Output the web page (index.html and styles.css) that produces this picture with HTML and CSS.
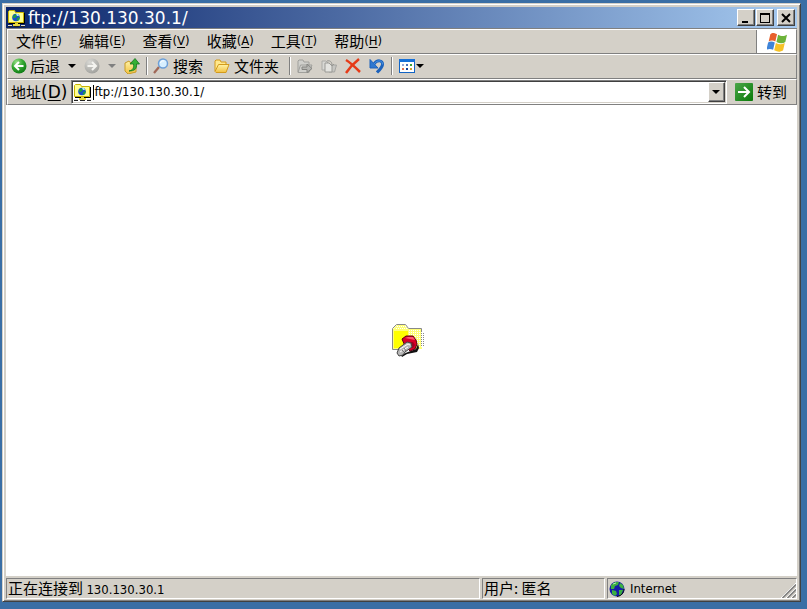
FILE: index.html
```html
<!DOCTYPE html>
<html lang="zh-CN">
<head>
<meta charset="utf-8">
<title>ftp://130.130.30.1/</title>
<link rel="stylesheet" href="styles.css">
</head>
<body>
<svg class="defs" aria-hidden="true">
  <defs>
    <radialGradient id="green" cx="35%" cy="25%" r="80%"><stop offset="0" stop-color="#9be08a"/><stop offset=".5" stop-color="#35a832"/><stop offset="1" stop-color="#0d7a14"/></radialGradient>
    <radialGradient id="grey" cx="35%" cy="25%" r="80%"><stop offset="0" stop-color="#d8d8d4"/><stop offset="1" stop-color="#a0a09c"/></radialGradient>
    <linearGradient id="go" x1="0" y1="0" x2="1" y2="1"><stop offset="0" stop-color="#4ca64a"/><stop offset="1" stop-color="#087a08"/></linearGradient>
    <linearGradient id="folder" x1="0" y1="0" x2="0" y2="1"><stop offset="0" stop-color="#fff3a8"/><stop offset="1" stop-color="#f2c141"/></linearGradient>
    <symbol id="ftp" viewBox="0 0 18 18">
      <path d="M1.500 13.500v-11l1-1h5l1 2h8v10z" fill="#ffff90" stroke="#c8b400"/>
      <path d="M2 14.500h15.500V4" fill="none" stroke="#000"/>
      <circle cx="9" cy="8.500" r="3.800" fill="#1a50c8"/>
      <path d="M6 7l3-2 1 2-2 2-2 0zM10 9l3-1-1 3-2 1z" fill="#1f9a48"/>
      <path d="M9 5l2 0 1 2-2 0z" fill="#a8e8ff"/>
      <path d="M1 16.500h4M14 16.500h4" stroke="#ddd"/><path d="M1 17.500h4M7 17.500h5M14 17.500h4" stroke="#222"/>
      <path d="M8 14h3v1H8zM6 15h7v2H6z" fill="#e8d840"/>
    </symbol>
  </defs>
</svg>
<main class="window">
  <header class="title-bar">
    <svg class="ftp-icon" aria-hidden="true"><use href="#ftp"/></svg>
    <h1>ftp://130.130.30.1/</h1>
    <div class="captions">
      <button aria-label="最小化"><svg viewBox="0 0 12 12"><path d="M2 9h6v2H2z"/></svg></button>
      <button aria-label="最大化"><svg viewBox="0 0 12 12"><path d="M1 1h10v10H1zM2 3v7h8V3z" fill-rule="evenodd"/></svg></button>
      <button class="close" aria-label="关闭"><svg viewBox="0 0 12 12"><path d="M2 2l8 8M10 2l-8 8" stroke="#000" stroke-width="2"/></svg></button>
    </div>
  </header>
  <div class="bars">
    <div class="band menu-band">
      <nav class="menu">
        <button>文件<span>(<u>F</u>)</span></button>
        <button>编辑<span>(<u>E</u>)</span></button>
        <button>查看<span>(<u>V</u>)</span></button>
        <button>收藏<span>(<u>A</u>)</span></button>
        <button>工具<span>(<u>T</u>)</span></button>
        <button>帮助<span>(<u>H</u>)</span></button>
      </nav>
      <div class="brand">
        <svg viewBox="1 1 18 18" aria-hidden="true">
          <path d="M4 3c2-2 4-1 6 0L8.500 9.500c-2-1-4-1-6 0z" fill="#e8602c"/>
          <path d="M11 3.500c2 1 5 2 8 0L17.500 10c-2 1.500-5 1.500-8 0z" fill="#6db33a"/>
          <path d="M2 10.500c2-1.500 4-1 6 0L6.500 17c-2-1-4-1-6 0z" fill="#3f84d8"/>
          <path d="M9 11c3 1.500 5 1.500 8 0l-1.500 6.500c-3 2-5 1.500-8 0z" fill="#f6c227"/>
        </svg>
      </div>
    </div>
    <div class="band toolbar">
      <button><svg viewBox="0 0 16 16"><circle cx="8" cy="8" r="7.500" fill="url(#green)"/><path d="M12.500 8H5M8 4L4 8l4 4" fill="none" stroke="#fff" stroke-width="2"/></svg>后退</button>
      <button class="drop" aria-label="后退列表"><svg viewBox="0 0 8 4"><path d="M0 0h8L4 4z"/></svg></button>
      <button aria-label="前进"><svg viewBox="0 0 16 16"><circle cx="8" cy="8" r="7.500" fill="url(#grey)"/><path d="M3.500 8H11M8 4l4 4-4 4" fill="none" stroke="#f4f4f0" stroke-width="2"/></svg></button>
      <button class="drop off" aria-label="前进列表"><svg viewBox="0 0 8 4"><path d="M0 0h8L4 4z"/></svg></button>
      <button aria-label="向上"><svg viewBox="0 0 16 16"><path d="M1 5l4-2 1 1.500 6-.5v10l-8 2-3-3z" fill="url(#folder)" stroke="#c89b28"/><path d="M5 13c4-1 5-3 4.500-7H6l5-5.500 4.500 5.500h-3c.5 5-2 7-7.500 7z" fill="#35b035" stroke="#12751a" stroke-width=".8"/></svg></button>
      <i class="separator"></i>
      <button class="wide"><svg viewBox="0 0 16 16"><path d="M1 15l5-6" stroke="#a06858" stroke-width="2.200"/><circle cx="10" cy="5.500" r="4.500" fill="#d7efff" stroke="#6c9fd8" stroke-width="1.500"/><path d="M7.500 5c.5-2 2-2.500 3.500-2" stroke="#fff" fill="none"/></svg>搜索</button>
      <button class="wide"><svg viewBox="0 0 16 16"><path d="M1 13V3l1-1h4l1 2h5v3" fill="#ffe88c" stroke="#d39a1c"/><path d="M1 13.500L4.500 6.500H15l-3 8H2z" fill="url(#folder)" stroke="#d39a1c"/></svg>文件夹</button>
      <i class="separator"></i>
      <button aria-label="移至" disabled><svg viewBox="0 0 16 16"><path d="M1 14V3l1-1h4l1 2h5v3M1 14.500L3.500 7H15l-3 7.500z" fill="#d0d0cc" stroke="#a0a09c"/><path d="M5 9h5V6l5 4.500-5 4v-3H5z" fill="#b5b5b1" stroke="#858581"/></svg></button>
      <button aria-label="复制到" disabled><svg viewBox="0 0 16 16"><path d="M8 14l2-7h5.500l-2 7z" fill="#c6c6c2" stroke="#a5a5a1"/><path d="M1 3h4l2 2v7H1z" fill="#d8d8d4" stroke="#aaaaa6"/><path d="M4 5h4l3 3v6H4z" fill="#e4e4e0" stroke="#999995"/><path d="M6 3c3-1 5 1 5 4M9 6l2 2 2-2" fill="none" stroke="#999995"/></svg></button>
      <button aria-label="删除"><svg viewBox="0 0 16 16"><path d="M1 2c5 3 9 7 14 12M14 1C9 5 5 9 1 15" fill="none" stroke="#e63b18" stroke-width="2.500"/></svg></button>
      <button aria-label="撤消"><svg viewBox="0 0 16 16"><path d="M5 6C8 1.500 14 2 13.500 6.500 13.200 9.500 11 11.500 8 14.500" fill="none" stroke="#1c62bc" stroke-width="3"/><path d="M1 1.500v8.500h8z" fill="#2f78d0" stroke="#1c62bc"/><path d="M5 6C8 1.500 14 2 13.500 6.500" fill="none" stroke="#4a94e4"/></svg></button>
      <i class="separator"></i>
      <button class="views" aria-label="查看方式"><svg viewBox="0 0 16 16"><rect x=".5" y="1.500" width="15" height="13" fill="#fff" stroke="#1264c4"/><path d="M0 1h16v3H0z" fill="#1670d8"/><path d="M3 6h2v2H3z" fill="#99a8d8"/><path d="M7 6h2v2H7z" fill="#4b70b8"/><path d="M11 6h2v2h-2z" fill="#38a038"/><path d="M3 10h2v2H3z" fill="#e07050"/><path d="M7 10h2v2H7z" fill="#153e98"/><path d="M11 10h2v2h-2z" fill="#d0a030"/></svg><svg class="tip" viewBox="0 0 8 4"><path d="M0 0h8L4 4z"/></svg></button>
    </div>
    <div class="band address-band">
      <label for="address">地址<span>(<u>D</u>)</span></label>
      <div class="combo">
        <svg class="ftp-icon" aria-hidden="true"><use href="#ftp"/></svg>
        <i class="caret"></i>
        <input id="address" type="text" value="ftp://130.130.30.1/">
        <button aria-label="地址列表"><svg viewBox="0 0 8 4"><path d="M0 0h8L4 4z"/></svg></button>
      </div>
      <button class="go"><svg viewBox="0 0 18 18"><rect width="18" height="18" rx="1" fill="url(#go)"/><path d="M3 9h10M9 4l5 5-5 5" fill="none" stroke="#fff" stroke-width="2"/></svg>转到</button>
    </div>
  </div>
  <section class="view">
    <svg viewBox="0 0 32 33" role="img" aria-label="正在连接">
      <path d="M1 25V5l4-4h8l3 4h14v20z" fill="#ffff78"/>
      <path d="M2 7h14v17H2z" fill="#ff0"/>
      <path d="M5 2.500h9M4 4.500h12M17 6.500h13M17 8.500h13M17 10.500h13M17 12.500h13M17 14.500h13M17 16.500h13M17 18.500h13M17 20.500h13M17 22.500h13" stroke="#fff" stroke-dasharray="1 1"/>
      <path d="M.5 25.500V4.500L4.500.5h9l3 4h13v3M.5 25.500H8" fill="none" stroke="#888"/>
      <path d="M29.500 5v17M31.500 9v14" stroke="#888" stroke-dasharray="1 1"/>
      <path d="M9 31l7-3 8-3 2-5 1 4-2 4-10 2-5 3z" fill="#111"/>
      <path d="M10 15l4-3h7l3 4 1 4-2 5-5 2-5-5z" fill="#d90028" stroke="#5a0010"/>
      <path d="M13 14l3-1 5 0 2 3-5-1z" fill="#ff5870"/>
      <path d="M17 18l4 0 2 3-2 3-4 0z" fill="#a00020"/>
      <path d="M5 29l2-5 8-6 4 1 1 4-7 5-2 3-4 1z" fill="#b8b8b8" stroke="#444"/>
      <path d="M8 25l8-5 2 1M8 28l8-5" fill="none" stroke="#fff"/>
      <path d="M12 24l2 3M10 26l2 2" stroke="#777"/>
    </svg>
  </section>
  <footer class="status">
    <div class="pane">正在连接到 <span>130.130.30.1</span></div>
    <div class="pane">用户: 匿名</div>
    <div class="pane zone">
      <svg viewBox="0 0 16 16" aria-hidden="true"><circle cx="8" cy="8" r="7.500" fill="#151ca8"/><path d="M2 4l4-3 4 0-1 3-3 1-1 3-3 0zM11 2l3 2 1 4-3-1-2-2zM3 9l4 1 1 3-2 2-3-2zM10 9l4 0-2 5-2 0z" fill="#3cb040"/><path d="M4 3l3-1" stroke="#b0f0b0"/><path d="M15 8c0 4-3 7-7 7.500" fill="none" stroke="#111"/></svg>
      <span>Internet</span>
      <svg class="grip" viewBox="0 0 16 16" aria-hidden="true"><path d="M1 16L16 1M6 16L16 6M11 16l5-5" stroke="#fff"/><path d="M2.500 16L16 2.500M7.500 16L16 7.500M12.500 16l3.500-3.500" stroke="#808080" stroke-width="1.600"/></svg>
    </div>
  </footer>
</main>
</body>
</html>
```
FILE: styles.css
```css
:root {
  --face: #d4d0c8;
  --shadow: #808080;
  --latin: "DejaVu Sans Condensed", "DejaVu Sans", sans-serif;
  --cjk: "Noto Sans CJK SC", sans-serif;
}
* { box-sizing: border-box; }
body {
  display: flex;
  min-height: 100vh;
  margin: 0;
  padding: 3px 6px 7px 2px;
  background: #3a6ea5;
  color: #000;
  font: 15px/20px var(--cjk);
}
.defs { position: absolute; width: 0; height: 0; }
svg { display: block; flex: none; }
button {
  display: flex;
  align-items: center;
  padding: 0;
  border: 0;
  background: none;
  color: inherit;
  font: inherit;
  white-space: nowrap;
}
u { text-underline-offset: 2px; text-decoration-thickness: 1px; }
.window {
  display: flex;
  flex: 1;
  flex-direction: column;
  min-width: 0;
  padding: 3px 3px 2px;
  border: 1px solid;
  border-color: var(--face) #404040 #404040 var(--face);
  background: var(--face);
  box-shadow: inset 1px 1px #fff, inset -1px -1px var(--shadow);
}
.title-bar {
  display: flex;
  align-items: center;
  height: 21px;
  padding: 0 2px 0 1px;
  background: linear-gradient(90deg, #0a246a, #a6caf0);
}
.ftp-icon { width: 18px; height: 18px; }
h1 {
  flex: 1;
  margin: 0 0 0 3px;
  color: #fff;
  font: 17px/20px "DejaVu Sans", sans-serif;
}
.captions { display: flex; gap: 1px; }
.captions button, .combo button {
  justify-content: center;
  border: 1px solid;
  border-color: #fff #404040 #404040 #fff;
  background: var(--face);
  box-shadow: inset -1px -1px var(--shadow);
}
.captions button { width: 18px; height: 17px; }
.captions svg { width: 12px; height: 12px; }
.captions .close { margin-left: 2px; }
.bars {
  border: solid var(--shadow);
  border-width: 1px 0 0 1px;
}
.band {
  display: flex;
  align-items: center;
  height: 25px;
  border: 1px solid;
  border-color: #fff var(--shadow) var(--shadow) #fff;
}
.menu-band { align-items: stretch; }
.menu {
  display: flex;
  flex: 1;
  gap: 17px;
  padding: 0 0 1px 8px;
  border-right: 1px solid var(--shadow);
}
.menu span { font: 13px/20px var(--latin); }
.brand {
  display: flex;
  align-items: center;
  justify-content: center;
  width: 39px;
  background: #fff;
}
.brand svg { width: 20px; height: 20px; }
.toolbar { gap: 8px; padding: 0 0 2px 3px; }
.toolbar button { gap: 3px; }
.toolbar .wide { gap: 4px; margin-left: -1px; padding-right: 4px; }
.toolbar svg { width: 16px; height: 16px; }
.toolbar .drop svg, .toolbar .tip, .combo button svg { width: 8px; height: 4px; }
.off { fill: #808080; }
.toolbar .views { gap: 1px; }
.separator {
  width: 2px;
  height: 18px;
  margin: 0 -2px;
  border-left: 1px solid var(--shadow);
  border-right: 1px solid #fff;
}
.address-band { height: 26px; padding: 0 9px 0 3px; }
.address-band label { margin-right: 4px; white-space: nowrap; }
.address-band label span { font: 17px/20px "DejaVu Sans", sans-serif; }
.combo {
  display: flex;
  flex: 1;
  align-items: center;
  min-width: 0;
  height: 24px;
  border: 1px solid;
  border-color: var(--shadow) #fff #fff var(--shadow);
  background: #fff;
  box-shadow: inset 1px 1px #404040, inset -1px -1px var(--face);
}
.combo .ftp-icon { margin: 0 2px 0 1px; }
.caret { width: 1px; height: 15px; background: #000; }
.combo input {
  flex: 1;
  min-width: 0;
  padding: 0;
  border: 0;
  outline: 0;
  background: none;
  font: 13px/20px var(--latin);
}
.combo button { width: 17px; height: 20px; margin-right: 1px; }
.go { gap: 4px; margin-left: 8px; }
.go svg { width: 18px; height: 18px; }
.view {
  display: flex;
  flex: 1;
  align-items: center;
  justify-content: center;
  padding-left: 12px;
  background: #fff;
}
.view svg { width: 32px; height: 33px; }
.status {
  display: grid;
  grid-template-columns: 1fr 123px 190px;
  gap: 2px;
  padding-top: 2px;
}
.pane {
  height: 21px;
  padding-left: 1px;
  border: 1px solid;
  border-color: var(--shadow) #fff #fff var(--shadow);
  line-height: 18px;
  white-space: nowrap;
}
.pane span { font: 13px/18px var(--latin); }
.zone { display: flex; align-items: center; gap: 5px; }
.zone svg { width: 16px; height: 16px; }
.zone .grip { align-self: flex-end; margin-left: auto; }
```
